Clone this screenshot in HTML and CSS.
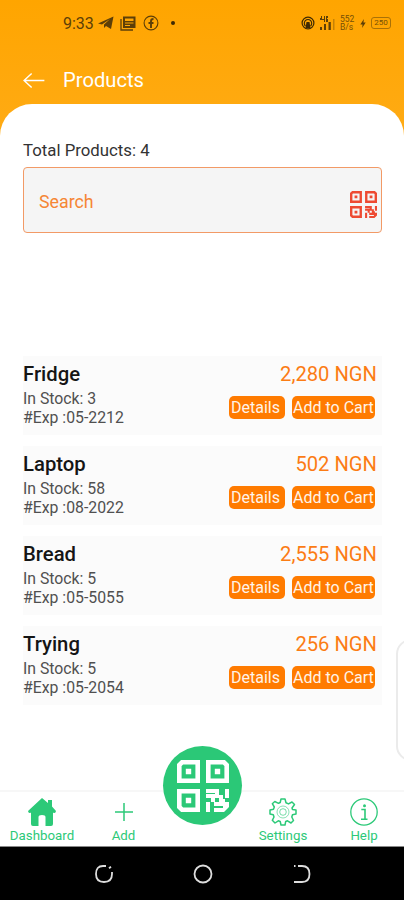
FILE: index.html
```
<!DOCTYPE html>
<html lang="en">
<head>
<meta charset="utf-8">
<title>Products</title>
<link rel="stylesheet" href="styles.css">
</head>
<body>
<svg class="defs" width="0" height="0" aria-hidden="true">
  <symbol id="qr" viewBox="0 0 52 52">
    <g fill="none" stroke="currentColor" stroke-width="4.600">
      <path d="M5 2.300H20.700V20.700H2.300V5Z" />
      <path d="M31.300 2.300H47L49.700 5V20.700H31.300Z" />
      <path d="M2.300 31.300H20.700V49.700H5L2.300 47Z" />
    </g>
    <path fill="currentColor" d="M8.800 8.800h5.400v5.400H8.800zM37.800 8.800h5.400v5.400h-5.400zM8.800 37.800h5.400v5.400H8.800z" />
    <path fill="currentColor" fill-rule="evenodd" d="M29 29H42V35H46V39H48V42H52V47L47 52H37V48H46V46H37V42H34V38H29V34H38V33H29ZM38 38V42H42V38ZM48 29H52V38H48ZM29 42H33V52H29Z" />
  </symbol>
</svg>
<div class="screen">
  <div class="status">
    <span class="clock">9:33</span>
    <svg class="s-plane" viewBox="0 0 16 14"><path d="M0 7.500 15.500.5 13 13 8 10 6 12V8.500L12 3 4 8.500Z" /></svg>
    <svg class="s-news" viewBox="0 0 16 15"><path d="M1 3V14H13" fill="none" stroke="currentColor" stroke-width="1.300" /><path fill-rule="evenodd" d="M3 .5H15.500V12H3ZM5 2.500V5H13.500V2.500ZM5 6.500V7.500H13.500V6.500ZM5 9V10H10V9Z" /></svg>
    <svg class="s-fb" viewBox="0 0 16 16"><circle cx="8" cy="8" r="6.900" fill="none" stroke="currentColor" stroke-width="1.100" /><path d="M8 13V6Q8 4 10.500 4M5.500 8H10.500" fill="none" stroke="currentColor" stroke-width="1.900" /></svg>
    <span class="s-dot"></span>
    <span class="grow"></span>
    <svg class="s-cast" viewBox="0 0 14 14"><g fill="none" stroke="currentColor"><circle cx="7" cy="7" r="5.900" stroke-width="1.200" /><path d="M4.500 10A3.700 3.700 0 1 1 9.500 10" stroke-width="1.100" /></g><path d="M5.500 6h3l1 6h-5z" /></svg>
    <svg class="s-signal" viewBox="0 0 16 15"><path d="M1 0h1v3h2V0h1v6H4V4H0V2h1zM6 0h2v2h-1v1h1v3H6zM0 11h2v3H0zM4 8h2v6H4zM8.500 6h2.300v8H8.500z" /><path opacity=".35" d="M13 3h1.500v11H13z" /></svg>
    <span class="rate"><span>552</span><span>B/s</span></span>
    <svg class="s-bolt" viewBox="0 0 6 10"><path d="M4 0 0 6h2.500L2 10 6 4H3.500z" /></svg>
    <span class="battery">250</span>
  </div>
  <header class="header">
    <svg class="back" viewBox="0 0 24 18"><path d="M23 9H1.500M9.500 1.500 1.500 9l8 7.500" /></svg>
    <h1>Products</h1>
  </header>
  <main class="sheet">
    <p class="total">Total Products: 4</p>
    <div class="search"><span>Search</span><svg class="search-qr"><use href="#qr" /></svg></div>
    <section class="list">
      <article class="card">
        <div class="info"><h2>Fridge</h2><p>In Stock: 3</p><p>#Exp :05-2212</p></div>
        <div class="side"><div class="price">2,280 NGN</div><div class="actions"><button class="details">Details</button><button class="cart">Add to Cart</button></div></div>
      </article>
      <article class="card">
        <div class="info"><h2>Laptop</h2><p>In Stock: 58</p><p>#Exp :08-2022</p></div>
        <div class="side"><div class="price">502 NGN</div><div class="actions"><button class="details">Details</button><button class="cart">Add to Cart</button></div></div>
      </article>
      <article class="card">
        <div class="info"><h2>Bread</h2><p>In Stock: 5</p><p>#Exp :05-5055</p></div>
        <div class="side"><div class="price">2,555 NGN</div><div class="actions"><button class="details">Details</button><button class="cart">Add to Cart</button></div></div>
      </article>
      <article class="card">
        <div class="info"><h2>Trying</h2><p>In Stock: 5</p><p>#Exp :05-2054</p></div>
        <div class="side"><div class="price">256 NGN</div><div class="actions"><button class="details">Details</button><button class="cart">Add to Cart</button></div></div>
      </article>
    </section>
    <div class="edge-handle"></div>
  </main>
  <nav class="tabs">
    <a class="tab"><svg viewBox="0 0 28 28"><path d="M14 0 20 5V2H24V8.500L28 13Q27.500 16 25 14.500V26Q25 28 23 28H17.500V19Q17.500 17 14 17T10.500 19V28H5Q3 28 3 26V14.500Q.5 16 0 13Z" fill="currentColor" /></svg><span>Dashboard</span></a>
    <a class="tab"><svg viewBox="0 0 28 28"><path d="M14 5V23M5 14H23" fill="none" stroke="currentColor" stroke-width="1.500" /></svg><span>Add</span></a>
    <div class="slot"><div class="scan"><svg><use href="#qr" /></svg></div></div>
    <a class="tab"><svg viewBox="0 0 28 28"><g fill="none" stroke="currentColor" stroke-width="1.500" stroke-linejoin="round"><path d="M12 1H16L17 4.800 19.500 5.900 23 4 25.500 6.500 23 10 23.500 11.500 27 12V16L23.500 16.700 22.800 19 24.500 22.500 22 25 18.500 22.800 16.700 23.500 16 27H12L11.200 23.500 9.300 22.800 6 25 3.300 22.300 5 19 4.300 16.800 1 16V12L4.500 11.200 5.300 9 3.300 5.700 5.800 3.500 9.500 5.300 11.200 4.500Z" /><circle cx="14" cy="14" r="6" stroke-width=".8" opacity=".7" /><circle cx="14" cy="14" r="3.300" stroke-width=".8" opacity=".8" /></g></svg><span>Settings</span></a>
    <a class="tab"><svg viewBox="0 0 28 28"><circle cx="14" cy="14" r="13.200" fill="none" stroke="currentColor" stroke-width="1.300" /><path d="M11.300 11.500H15V21M11 21.200H17.500" fill="none" stroke="currentColor" stroke-width="1.600" /><circle cx="14.500" cy="7.700" r="1.500" fill="currentColor" /></svg><span>Help</span></a>
  </nav>
  <div class="system">
    <svg viewBox="0 0 20 20"><path d="M12 2H9Q2 2 2 10T10 18 18 10V8M15 4.300 17 2.800" /></svg>
    <svg viewBox="0 0 20 20"><circle cx="10" cy="10" r="8.500" /></svg>
    <svg viewBox="0 0 20 20"><path d="M6 2H10Q17.500 2 17.500 10T10 18H2M2 2H3.500" /></svg>
  </div>
</div>
</body>
</html>
```
FILE: styles.css
```
* { box-sizing: border-box; margin: 0; padding: 0; }
body { font-family: Roboto, "Liberation Sans", sans-serif; background: #fff; }
.defs { position: absolute; }
.screen {
  width: 404px; height: 900px; overflow: hidden;
  display: flex; flex-direction: column;
  background: linear-gradient(#ffa500, #ffab15 140px);
}
.status {
  height: 46px; flex: none; display: flex; align-items: center;
  padding: 0 13px 0 63px; color: #5d3f08;
}
.status svg { fill: currentColor; flex: none; }
.clock { width: 35px; font-size: 16px; }
.s-plane { width: 16px; height: 14px; }
.s-news { width: 16px; height: 15px; margin-left: 6px; }
.s-fb { width: 16px; height: 16px; margin-left: 7px; }
.s-dot { width: 4px; height: 4px; border-radius: 50%; background: #3f2a04; margin-left: 12px; }
.grow { flex: 1; }
.s-cast { width: 14px; height: 14px; color: #3f2a04; }
.s-signal { width: 16px; height: 15px; margin-left: 5px; }
.rate {
  display: flex; flex-direction: column; width: 15px; margin-left: 4px;
  font-size: 8.500px; line-height: 8.500px; opacity: .85;
}
.s-bolt { width: 6px; height: 9px; margin-left: 5px; }
.battery {
  width: 20px; height: 12px; margin-left: 5px; border: 1px solid #9b6808; border-radius: 3px;
  font-size: 8px; line-height: 10px; text-align: center; opacity: .85;
}
.header { height: 58px; flex: none; display: flex; align-items: center; padding: 10px 23px 0 22px; color: #fff; }
.back { width: 24px; height: 17px; fill: none; stroke: #fff; stroke-width: 1.5; }
.header h1 { margin-left: 17px; font-size: 20.200px; font-weight: 400; }
.sheet {
  position: relative; flex: 1; background: #fff;
  border-radius: 32px 32px 0 0; padding: 36px 23px 0;
}
.total { height: 20px; line-height: 20px; font-size: 16.800px; color: #333; }
.search {
  margin-top: 7px; width: 359px; height: 66px; padding: 3px 4px 0 15px;
  border: 1px solid #f29a66; border-radius: 4px; background: #f5f5f5;
  display: flex; align-items: center; justify-content: space-between;
  color: #f58634; font-size: 17.800px;
}
.search-qr { width: 27px; height: 27px; color: #ee4a32; margin-top: 5px; }
.list { margin-top: 123px; display: flex; flex-direction: column; gap: 11px; }
.card { width: 359px; height: 79px; background: #fbfbfb; display: flex; justify-content: space-between; padding: 6px 5px 0 0; }
.info h2 { font-size: 20.300px; line-height: 25px; font-weight: 500; color: #151515; }
.info p { font-size: 15.800px; line-height: 18.500px; color: #505050; }
.info h2 + p { margin-top: 3px; }
.side { display: flex; flex-direction: column; align-items: flex-end; }
.price { font-size: 20.200px; line-height: 25px; color: #fb7c14; }
.actions { display: flex; gap: 7px; margin: 9px 2px 0 0; }
.actions button {
  height: 23px; border: 0; border-radius: 5px; background: #ff7b00; color: #fff4e9;
  font-family: inherit; font-size: 16px; line-height: 23px; text-align: left; white-space: nowrap;
}
.actions .details { width: 56px; padding-left: 2px; }
.actions .cart { width: 83px; padding-left: 1px; }
.edge-handle {
  position: absolute; left: 396px; top: 535px; width: 30px; height: 122px;
  border: 2px solid #ebebeb; border-radius: 15px; background: #fff;
}
.tabs {
  position: relative; height: 57px; flex: none; display: grid; grid-template-columns: 84px 79px 79px 82px 80px;
  background: #fff; border-top: 2px solid #f7f7f7; border-bottom: 1px solid #888; color: #2cc978;
}
.tab { display: flex; flex-direction: column; align-items: center; padding-top: 6px; font-size: 13.300px; line-height: 20px; }
.tab svg { width: 28px; height: 28px; }
.tab span { white-space: nowrap; }
.slot { position: relative; }
.scan {
  position: absolute; left: 0; top: -46px; width: 79px; height: 79px; border-radius: 50%;
  background: #2bc877; color: #fff; display: grid; place-items: center;
}
.scan svg { width: 52px; height: 52px; }
.system { height: 53px; flex: none; background: #000; display: flex; gap: 79px; padding: 17px 0 0 94px; }
.system svg { width: 20px; height: 20px; fill: none; stroke: #ddd; stroke-width: 1.800; }
```
